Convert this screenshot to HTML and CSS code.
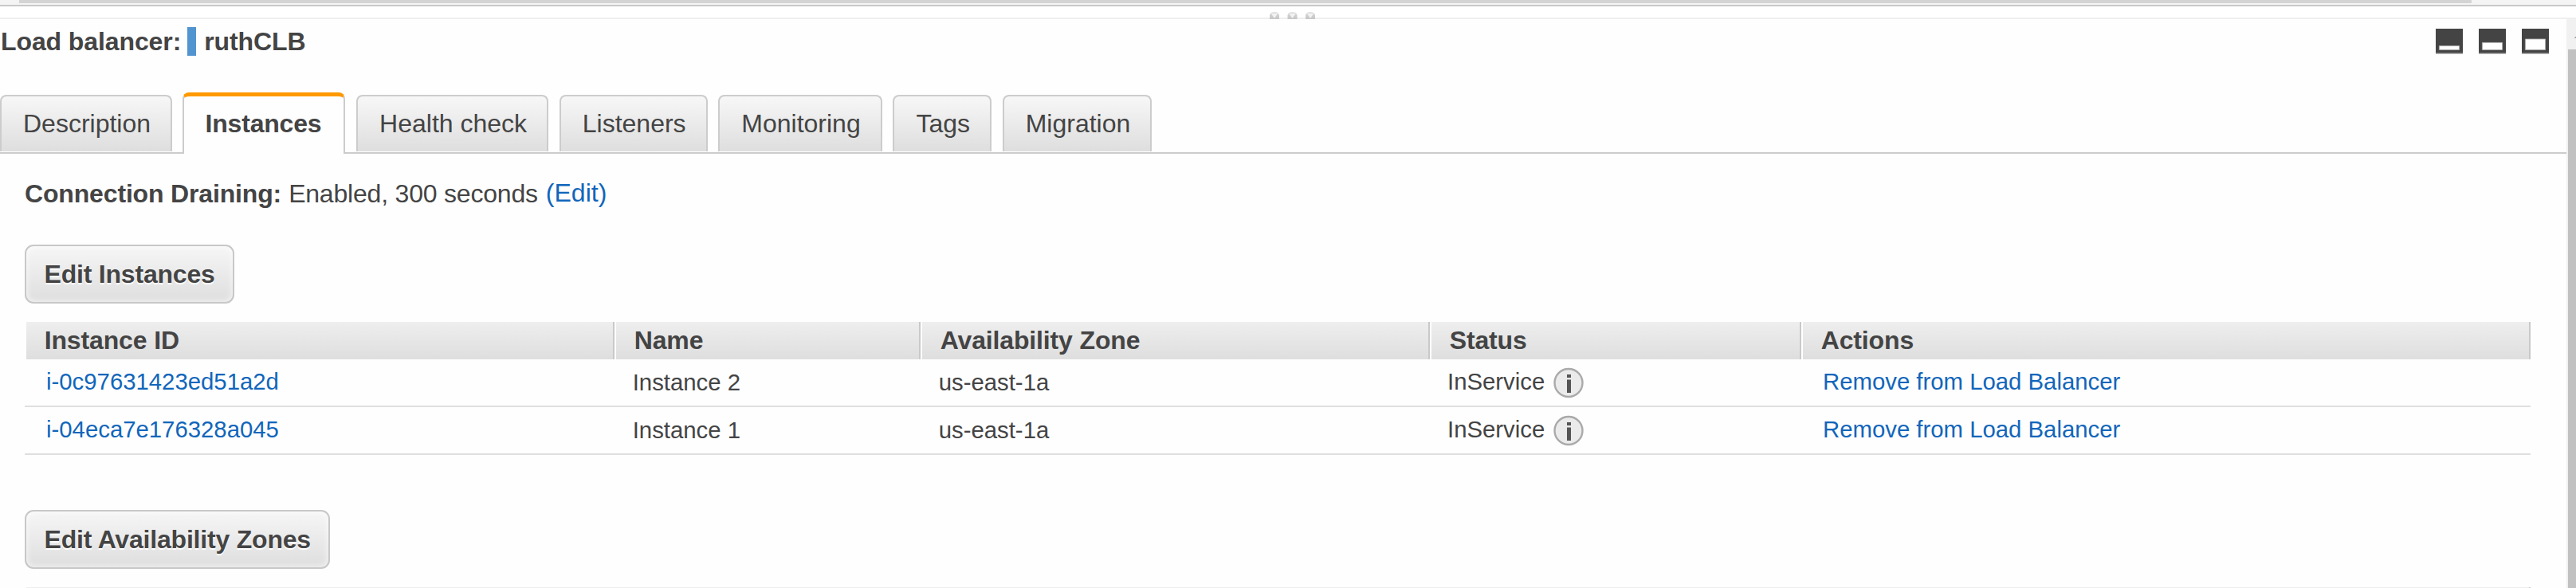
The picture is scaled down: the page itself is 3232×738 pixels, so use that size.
FILE: index.html
```html
<!DOCTYPE html>
<html lang="en">
<head>
<meta charset="utf-8">
<title>Load balancer: ruthCLB</title>
<link rel="stylesheet" href="styles.css">
</head>
<body>
<div class="hscroll"><div class="hscroll-thumb"></div></div>
<div class="splitter">
  <svg class="grip" width="58" height="9" viewBox="0 0 58 9">
    <defs><linearGradient id="cup" x1="0" y1="0" x2="0" y2="1"><stop offset="0" stop-color="#e4e4e4"/><stop offset=".5" stop-color="#cfcfcf"/><stop offset="1" stop-color="#c6c6c6"/></linearGradient></defs>
    <g fill="url(#cup)"><path d="M0 9V4Q1 0 6 0T12 4V9Z"/><path d="M22.500 9V4Q23.500 0 28.500 0T34.500 4V9Z"/><path d="M45 9V4Q46 0 51 0T57 4V9Z"/></g>
    <g fill="#f2f2f2"><path d="M2 2H10L6.500 7.500H5.500Z"/><path d="M24.500 2H32.500L29 7.500H28Z"/><path d="M47 2H55L51.500 7.500H50.500Z"/></g>
  </svg>
</div>
<div class="pane">
  <main class="content">
    <header class="title">
      <span>Load balancer:</span><i class="mark"></i><span>ruthCLB</span>
      <div class="sizes">
        <svg width="34" height="32" viewBox="0 0 34 32"><path fill="#b4b4b4" d="M0 30h34v2H0z"/><path fill="#444" d="M0 0h34v30.500H0z"/><path fill="#fff" stroke="#aaa" stroke-width=".8" d="M4.400 21.600h25.200v5H4.400z"/></svg>
        <svg width="34" height="32" viewBox="0 0 34 32"><path fill="#b4b4b4" d="M0 30h34v2H0z"/><path fill="#444" d="M0 0h34v30.500H0z"/><path fill="#fff" stroke="#aaa" stroke-width=".8" d="M4.400 17.400h25.200v9.200H4.400z"/></svg>
        <svg width="34" height="32" viewBox="0 0 34 32"><path fill="#b4b4b4" d="M0 30h34v2H0z"/><path fill="#444" d="M0 0h34v30.500H0z"/><path fill="#fff" stroke="#aaa" stroke-width=".8" d="M4.400 13h25.200v13.600H4.400z"/></svg>
      </div>
    </header>
    <nav class="tabs">
      <a class="tab">Description</a>
      <a class="tab active">Instances</a>
      <a class="tab">Health check</a>
      <a class="tab">Listeners</a>
      <a class="tab">Monitoring</a>
      <a class="tab">Tags</a>
      <a class="tab">Migration</a>
    </nav>
    <section class="panel">
      <div class="draining"><b>Connection Draining:</b><span>Enabled, 300 seconds</span><a class="edit">(Edit)</a></div>
      <button class="btn">Edit Instances</button>
      <div class="table">
        <div class="row head"><div>Instance ID</div><div>Name</div><div>Availability Zone</div><div>Status</div><div>Actions</div></div>
        <div class="row"><a class="id">i-0c97631423ed51a2d</a><div class="low">Instance 2</div><div class="low">us-east-1a</div>
          <div class="status">InService<svg class="info" width="38" height="39" viewBox="0 0 38 39"><circle cx="19" cy="19.500" r="17.500" fill="#ebebeb" stroke="#aaa" stroke-width="2.400"/><path fill="#555" d="M17 9h5v4h-5zM17 15.500h5v16.500h-5z"/></svg></div>
          <a class="action">Remove from Load Balancer</a></div>
        <div class="row"><a class="id">i-04eca7e176328a045</a><div class="low">Instance 1</div><div class="low">us-east-1a</div>
          <div class="status">InService<svg class="info" width="38" height="39" viewBox="0 0 38 39"><circle cx="19" cy="19.500" r="17.500" fill="#ebebeb" stroke="#aaa" stroke-width="2.400"/><path fill="#555" d="M17 9h5v4h-5zM17 15.500h5v16.500h-5z"/></svg></div>
          <a class="action">Remove from Load Balancer</a></div>
      </div>
      <button class="btn">Edit Availability Zones</button>
      <div class="next-table"></div>
    </section>
  </main>
  <div class="vscroll"><svg class="arrow" width="10" height="38" viewBox="0 0 10 38"><path fill="#a3a3a3" d="M8 24V23H9V22H10V24Z"/></svg><div class="vscroll-thumb"></div></div>
</div>
</body>
</html>
```
FILE: styles.css
```css
* { box-sizing: border-box; }
body {
  margin: 0;
  width: 3232px;
  height: 738px;
  overflow: hidden;
  display: flex;
  flex-direction: column;
  background: #fff;
  color: #444;
  font: 32px/36px "Liberation Sans", Arial, sans-serif;
}
svg { display: block; flex: none; }
a { color: #1166bb; }

.hscroll { height: 8px; flex: none; background: #f4f4f4; border-bottom: 2px solid #c9c9c9; padding-left: 24px; }
.hscroll-thumb { width: 3077px; height: 4px; background: #d4d4d4; }
.splitter { height: 16px; flex: none; border-bottom: 2px solid #efefef; padding: 7px 0 0 1593px; }

.pane { display: flex; flex: 1; min-height: 0; }
.content { width: 3220px; background: #fefefe; }
.vscroll { width: 12px; background: #f1f1f1; padding-left: 2px; display: flex; flex-direction: column; }
.vscroll-thumb { flex: 1; background: #c1c1c1; }

.title { display: flex; height: 92px; padding: 10px 22px 0 1px; font-weight: bold; letter-spacing: -.1px; }
.mark { width: 11px; height: 36px; margin: 0 10px 0 8px; background: #5294cf; }
.sizes { display: flex; gap: 20px; margin-left: auto; padding-top: 2px; }

.tabs { display: flex; align-items: flex-end; gap: 13.700px; height: 77px; border-bottom: 2px solid #ccc; }
.tab {
  height: 71px;
  margin-bottom: 1px;
  padding: 16px 25px 0 27px;
  border: 2px solid #ccc;
  border-bottom: 0;
  border-radius: 8px 8px 0 0;
  background: linear-gradient(#f7f7f7, #dedede);
  color: #444;
  white-space: nowrap;
}
.tab.active {
  height: 77px;
  margin: 0 0 -2px -.700px;
  padding: 16px 28px 0 26.500px;
  border-top: 5px solid #f90;
  background: #fefefe;
  font-weight: bold;
  letter-spacing: -.2px;
}

.panel { padding: 32px 45px 0 31px; }
.draining { display: flex; height: 82px; }
.draining b { letter-spacing: -.16px; }
.draining span { margin-left: 9px; letter-spacing: -.2px; }
.edit { margin: -1px 0 0 10px; }

.btn {
  display: block;
  height: 74px;
  padding: 0 22.500px;
  border: 2px solid #c8c8c8;
  border-radius: 11px;
  background: linear-gradient(#f6f6f6, #dedede);
  box-shadow: inset 0 0 8px rgba(255, 255, 255, .8);
  color: #444;
  font: bold 32px/36px "Liberation Sans", Arial, sans-serif;
  letter-spacing: -.2px;
  text-shadow: 0 2px 1px #fff;
  white-space: nowrap;
}

.table { margin: 23px 0 69px; }
.row {
  display: grid;
  grid-template-columns: 740px 384px 639px 466px 915px;
  height: 60px;
  border-bottom: 2px solid #dfdfdf;
  font-size: 29.333px;
  line-height: 34px;
}
.row > * { padding: 11px 0 0 22px; }
.row > .id { padding-left: 27px; }
.row > .low { padding: 12px 0 0 22.700px; }
.row > .status { display: flex; padding-left: 22px; }
.row > .action { padding-left: 27px; }
.info { margin: -1px 0 0 10.500px; }
.row.head {
  height: 47px;
  margin-left: 2px;
  grid-template-columns: 738px 384px 639px 466px 915px;
  border: 0;
  background: linear-gradient(#eee, #dedede);
  font: bold 32px/36px "Liberation Sans", Arial, sans-serif;
  letter-spacing: -.14px;
}
.head > * { padding: 5px 0 0 22.700px; border-left: 2px solid #fff; border-right: 2px solid #c9c9c9; }
.head > :first-child { border-left: 0; }

.next-table { height: 1px; margin: 23px 0 0 2px; background: #eee; border-right: 2px solid #ccc; }
```
